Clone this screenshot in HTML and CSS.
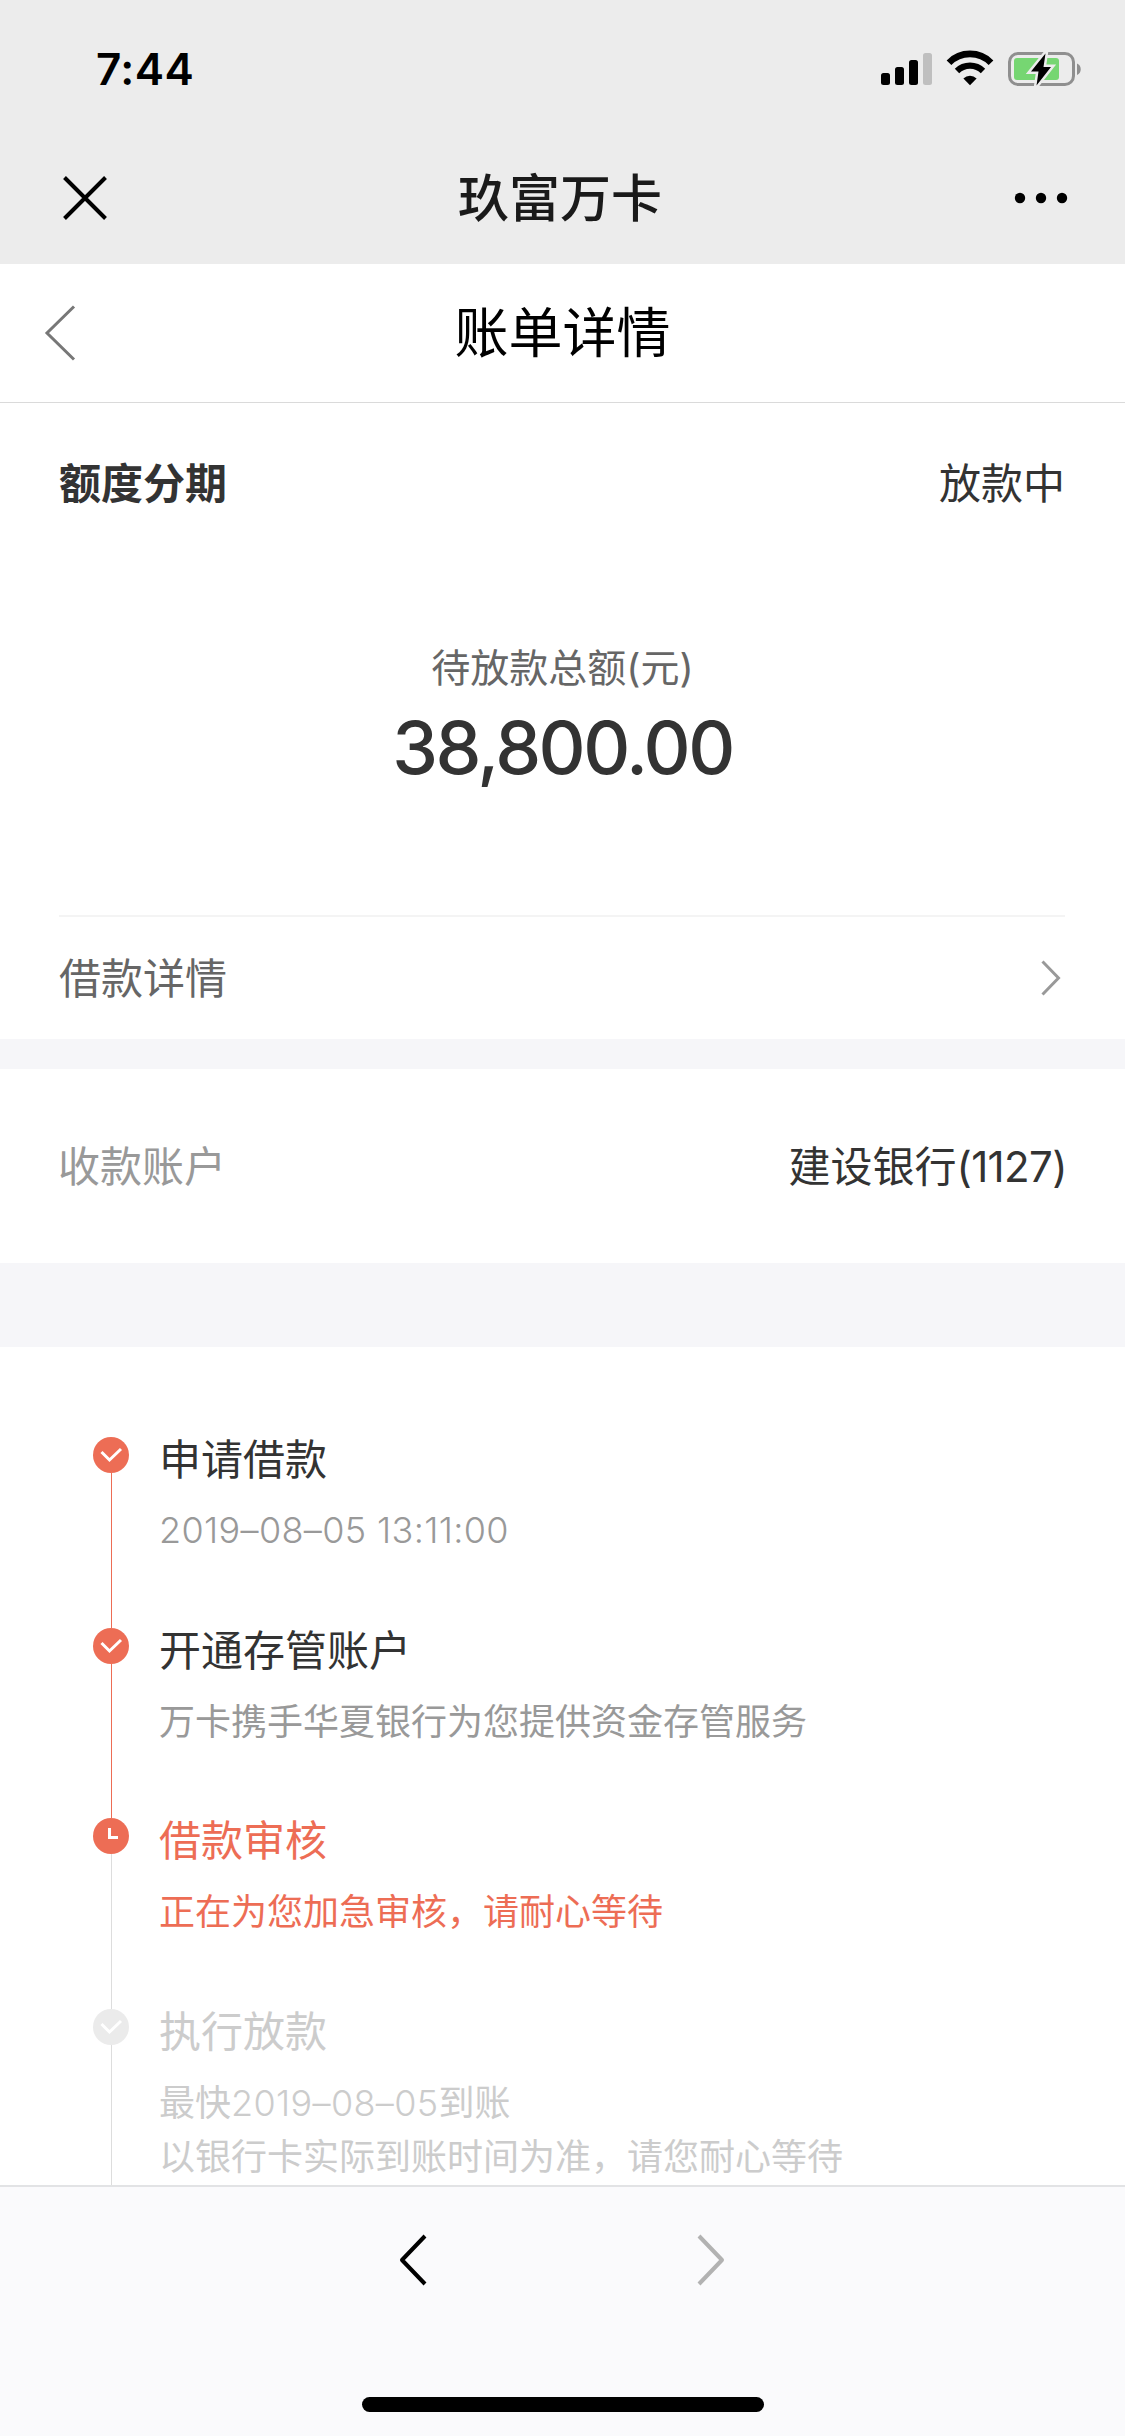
FILE: index.html
```html
<!DOCTYPE html>
<html lang="zh-CN">
<head>
<meta charset="utf-8">
<title>账单详情</title>
<link rel="stylesheet" href="styles.css">
</head>
<body>
<div class="screen">
  <header class="top">
    <div class="status">
      <span class="time">7:44</span>
      <svg class="status-icons" width="204" height="38" viewBox="0 0 204 38">
        <rect x="1" y="23" width="9" height="12" rx="2.5"/>
        <rect x="15" y="17" width="9" height="18" rx="2.5"/>
        <rect x="29" y="10" width="9" height="25" rx="2.5"/>
        <rect x="43" y="3" width="9" height="32" rx="2.5" fill="#bfbfbf"/>
        <g fill="none" stroke="#000">
          <path d="M69 12.7a29.5 29.5 0 0 1 42 0" stroke-width="6.6"/>
          <path d="M77 21a18.3 18.3 0 0 1 26 0" stroke-width="6.2"/>
        </g>
        <path d="M83.4 28.5a9.5 9.5 0 0 1 13.200 0L90 35.200z"/>
        <rect x="129.500" y="3.500" width="64" height="31" rx="8.500" fill="none" stroke="#8f8f8f" stroke-width="3"/>
        <rect x="134" y="8" width="45" height="22" rx="3" fill="#76d672"/>
        <path d="M197 13.500c5 2 5 9.500 0 11.500z" fill="#8f8f8f"/>
        <path d="M165.500 3.500L151 21.500h7.500L156.500 35.500L171 17h-7.500z" stroke="#ececec" stroke-width="5" paint-order="stroke"/>
      </svg>
    </div>
    <div class="appbar">
      <svg width="44" height="44" viewBox="0 0 44 44"><path d="M1.500 1.500l41 41M42.500 1.500l-41 41" fill="none" stroke="#000" stroke-width="4"/></svg>
      <h1 class="app-title">玖富万卡</h1>
      <svg width="54" height="12" viewBox="0 0 54 12"><circle cx="6" cy="6" r="5.200"/><circle cx="27" cy="6" r="5.200"/><circle cx="48" cy="6" r="5.200"/></svg>
    </div>
  </header>

  <div class="pagebar">
    <svg width="32" height="56" viewBox="0 0 32 56"><path d="M30 1.500L3 28L30 54.500" fill="none" stroke="#777" stroke-width="3"/></svg>
    <h2 class="page-title">账单详情</h2>
    <span></span>
  </div>

  <main class="content">
    <section class="summary">
      <div class="row kind"><b>额度分期</b><span>放款中</span></div>
      <div class="total">
        <div class="total-label">待放款总额(元)</div>
        <div class="amount">38,800.00</div>
      </div>
      <div class="row detail">
        <span>借款详情</span>
        <svg width="20" height="36" viewBox="0 0 20 36"><path d="M1.500 1.500L17.500 18L1.500 34.500" fill="none" stroke="#999" stroke-width="3"/></svg>
      </div>
    </section>
    <section class="row account"><span class="muted">收款账户</span><span>建设银行<span class="tail">(1127)</span></span></section>
    <section class="timeline">
      <div class="step">
        <div class="marker">
          <svg width="36" height="36" viewBox="0 0 36 36"><circle cx="18" cy="18" r="18" fill="#ed6d55"/><path d="M8.500 15l8 8L28 12" fill="none" stroke="#fff" stroke-width="3"/></svg>
          <i class="line"></i>
        </div>
        <div class="text"><div class="name">申请借款</div><div class="desc date">2019–08–05 13:11:00</div></div>
      </div>
      <div class="step">
        <div class="marker">
          <svg width="36" height="36" viewBox="0 0 36 36"><circle cx="18" cy="18" r="18" fill="#ed6d55"/><path d="M8.500 15l8 8L28 12" fill="none" stroke="#fff" stroke-width="3"/></svg>
          <i class="line"></i>
        </div>
        <div class="text"><div class="name">开通存管账户</div><div class="desc">万卡携手华夏银行为您提供资金存管服务</div></div>
      </div>
      <div class="step current">
        <div class="marker">
          <svg width="36" height="36" viewBox="0 0 36 36"><circle cx="18" cy="18" r="18" fill="#ed6d55"/><path d="M16.500 10v9.500H25" fill="none" stroke="#fff" stroke-width="3"/></svg>
          <i class="line"></i>
        </div>
        <div class="text"><div class="name">借款审核</div><div class="desc">正在为您加急审核，请耐心等待</div></div>
      </div>
      <div class="step pending">
        <div class="marker">
          <svg width="36" height="36" viewBox="0 0 36 36"><circle cx="18" cy="18" r="18" fill="#ebebeb"/><path d="M8.500 15l8 8L28 12" fill="none" stroke="#fff" stroke-width="3"/></svg>
          <i class="line"></i>
        </div>
        <div class="text"><div class="name">执行放款</div><div class="desc">最快<span class="date">2019–08–05</span>到账<br>以银行卡实际到账时间为准，请您耐心等待</div></div>
      </div>
    </section>
  </main>

  <footer class="browser">
    <nav class="history">
      <svg width="28" height="52" viewBox="0 0 28 52"><path d="M26 2L3 26L26 50" fill="none" stroke="#000" stroke-width="4" stroke-linejoin="round"/></svg>
      <svg width="28" height="52" viewBox="0 0 28 52"><path d="M2 2L25 26L2 50" fill="none" stroke="#b2b2b2" stroke-width="4" stroke-linejoin="round"/></svg>
    </nav>
    <div class="home"></div>
  </footer>
</div>
</body>
</html>
```
FILE: styles.css
```css
* { box-sizing: border-box; margin: 0; padding: 0; }
body {
  background: #fff;
  color: #333;
  font: 400 42px/60px Inter, "Noto Sans CJK SC", sans-serif;
}
svg { display: block; }
.screen { display: flex; flex-direction: column; width: 1125px; height: 2436px; overflow: hidden; }

.top { height: 264px; background: #ececec; color: #000; }
.status { display: flex; justify-content: space-between; height: 132px; padding: 39px 41px 0 96px; }
.time { font-size: 44px; font-weight: 600; line-height: 60px; letter-spacing: 0.4px; }
.status-icons { margin-top: 11px; }
.appbar, .pagebar { display: grid; grid-template-columns: 1fr auto 1fr; align-items: center; }
.appbar { height: 132px; padding: 0 57px 0 63px; }
.appbar > :last-child, .pagebar > :last-child { justify-self: end; }
.app-title { margin: 2px 9px 0 -2px; font-size: 51px; font-weight: 500; line-height: 70px; color: #1a1a1a; }
.pagebar { height: 139px; flex: none; padding: 0 44px; border-bottom: 1px solid #dadada; color: #000; }
.page-title { padding-top: 2px; font-size: 54px; font-weight: 400; line-height: 76px; }

.content { flex: 1; min-height: 0; overflow: hidden; background: #f6f6f9; }
.row { display: flex; justify-content: space-between; align-items: center; }
.summary { height: 636px; padding: 0 60px 0 59px; background: #fff; }
.kind { height: 160px; padding-top: 2px; }
.kind b { font-weight: 700; }
.total { height: 352px; padding: 76px 0 0 1px; text-align: center; }
.total-label { font-size: 39px; line-height: 58px; color: #666; }
.amount { font-size: 73px; font-weight: 500; line-height: 102px; letter-spacing: -2.5px; }
.detail { height: 124px; border-top: 2px solid #f4f4f4; color: #666; padding-right: 4px; }
.detail span { padding-top: 2px; }
.account { height: 194px; margin-top: 30px; padding: 1px 58px 0 58px; background: #fff; }
.muted { color: #999; }
.tail { letter-spacing: -0.6px; }

.timeline { margin-top: 84px; padding: 90px 93px 0; background: #fff; }
.step { display: flex; gap: 30px; height: 190.67px; }
.marker { display: flex; flex-direction: column; align-items: center; width: 36px; padding-left: 1px; }
.marker svg { flex: none; margin-left: -1px; }
.line { flex: 1; width: 1px; background: #ed6d55; }
.name { line-height: 45px; }
.desc { margin-top: 22px; font-size: 36px; line-height: 54px; color: #999; }
.date { font-weight: 300; letter-spacing: 0.35px; }
.desc.date { margin-top: 21px; }
.current .name, .current .desc { color: #ed6d55; }
.current .line, .pending .line { background: #ddd; }
.pending .name, .pending .desc { color: #ccc; }

.browser { flex: none; height: 251px; border-top: 2px solid #e2e3e5; background: #fafafc; }
.history { display: flex; justify-content: center; gap: 270px; padding: 47px 1px 0 0; }
.home { width: 402px; height: 15px; margin: 111px auto 0; border-radius: 8px; background: #000; }
```
